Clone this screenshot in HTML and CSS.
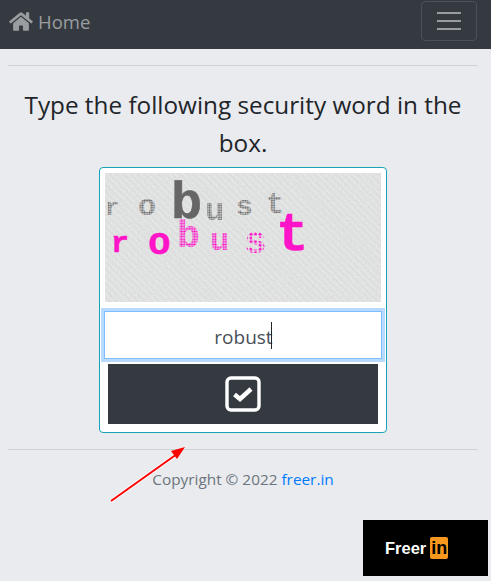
FILE: index.html
```html
<!DOCTYPE html>
<html lang="en">
<head>
    <meta charset="UTF-8">
    <meta name="viewport" content="width=device-width, initial-scale=1.0">
    <title>Security word</title>
    <link rel="stylesheet" href="styles.css">
</head>
<body>
    <!-- Top bar -->
    <nav class="navbar">
        <a class="brand" href="#">
            <svg class="home-icon" viewBox="0 0 576 512"><path fill="currentColor" d="M280.4 148.3L96 300.1V464a16 16 0 0 0 16 16l112.1-.3a16 16 0 0 0 15.9-16V368a16 16 0 0 1 16-16h64a16 16 0 0 1 16 16v95.6a16 16 0 0 0 16 16.1L464 480a16 16 0 0 0 16-16V300L295.7 148.3a12.2 12.2 0 0 0-15.3 0zM571.6 251.5L488 182.6V44.1a12 12 0 0 0-12-12h-56a12 12 0 0 0-12 12v72.6L318.5 43a48 48 0 0 0-61 0L4.3 251.5a12 12 0 0 0-1.6 16.9l25.5 31A12 12 0 0 0 45.2 301l235.2-193.7a12.2 12.2 0 0 1 15.3 0L530.9 301a12 12 0 0 0 16.9-1.6l25.5-31a12 12 0 0 0-1.7-16.9z"/></svg>
            Home
        </a>
        <button class="toggler"><span class="toggler-bars"></span></button>
    </nav>

    <main class="content">
        <hr class="rule rule-top">
        <h1 class="title">Type the following security word in the box.</h1>

        <form class="card">
            <!-- Captcha picture -->
            <div class="captcha">
                <svg class="captcha-word" viewBox="0 0 276 129">
                    <defs>
                        <filter id="paper">
                            <feTurbulence type="fractalNoise" baseFrequency="0.55" numOctaves="2" seed="4"/>
                            <feColorMatrix type="matrix" values="0 0 0 0 0.55  0 0 0 0 0.55  0 0 0 0 0.55  0.5 0 0 0 -0.12"/>
                        </filter>
                        <pattern id="dots-grey" width="2.4" height="2.4" patternUnits="userSpaceOnUse"><circle cx="1.2" cy="1.2" r="1" fill="#666"/></pattern>
                        <pattern id="dots-pink" width="2.6" height="2.6" patternUnits="userSpaceOnUse"><circle cx="1.3" cy="1.3" r="1.1" fill="#ff14c8"/></pattern>
                        <pattern id="specks-pink" width="4.5" height="3.7" patternUnits="userSpaceOnUse"><circle cx="2" cy="2" r="1.5" fill="#ff14c8"/></pattern>
                    </defs>
                    <rect width="276" height="129" filter="url(#paper)"/>
                    <g class="grey-word">
                        <text x="0" y="42" font-size="24" fill="url(#dots-grey)">r</text>
                        <text x="33" y="42" font-size="30" fill="url(#dots-grey)">o</text>
                        <text x="66" y="45" class="solid" font-size="52">b</text>
                        <text x="100" y="47" class="thick" font-size="32" fill="url(#dots-grey)">u</text>
                        <text x="131" y="42" font-size="28" fill="url(#dots-grey)">s</text>
                        <text x="161" y="40" font-size="30" fill="url(#dots-grey)">t</text>
                    </g>
                    <g class="pink-word">
                        <text x="6" y="79" class="solid" font-size="30">r</text>
                        <text x="43" y="81" class="solid" font-size="38">o</text>
                        <text x="72" y="74" font-size="38" fill="url(#dots-pink)">b</text>
                        <text x="105" y="77" font-size="32" fill="url(#dots-pink)">u</text>
                        <text x="139" y="80" class="thick" font-size="38" fill="url(#specks-pink)">s</text>
                        <text x="171" y="77" class="solid" font-size="54">t</text>
                    </g>
                </svg>
            </div>
            <input class="word-input" type="text" value="robust">
            <span class="caret"></span>
            <button class="submit" type="button">
                <svg class="check-icon" viewBox="0 0 36 36">
                    <rect x="2" y="2" width="32" height="32" rx="4" fill="none" stroke="#fff" stroke-width="3.4"/>
                    <path d="M9.5 18.5l5.5 4.5L26 13" fill="none" stroke="#fff" stroke-width="4.4"/>
                </svg>
            </button>
        </form>

        <hr class="rule rule-bottom">
        <p class="copyright">Copyright © 2022 <a href="#">freer.in</a></p>
    </main>

    <!-- Red arrow drawn over the page -->
    <svg class="arrow" viewBox="0 0 80 60">
        <path d="M2 56L68 9" stroke="#fff" stroke-width="3.5"/>
        <path d="M2 56L68 9" stroke="#f00" stroke-width="2"/>
        <path d="M76 2L62 6L68 14Z" fill="#f00"/>
    </svg>

    <a class="badge" href="#">Freer <span class="badge-in">in</span></a>
</body>
</html>
```
FILE: styles.css
```css
html, body {
    height: 100%;
}

body {
    margin: 0;
    background: #e9ebef;
    color: #212529;
    font-family: 'Open Sans', 'Noto Sans', sans-serif;
    overflow: hidden;
}

.navbar {
    display: flex;
    justify-content: space-between;
    align-items: center;
    height: 49px;
    box-sizing: border-box;
    padding: 0 14px 7px 9px;
    background: #343a40;
}

.brand {
    display: flex;
    align-items: center;
    gap: 5px;
    color: #9a9da0;
    font-size: 18.5px;
    text-decoration: none;
}

.home-icon {
    width: 24px;
    height: 21px;
}

.toggler {
    width: 56px;
    height: 40px;
    padding: 0;
    display: flex;
    align-items: center;
    justify-content: center;
    background: none;
    border: 1px solid #4c5157;
    border-radius: 4px;
}

.toggler-bars {
    display: block;
    width: 24px;
    height: 18px;
    box-sizing: border-box;
    border-top: 2px solid #9a9da0;
    border-bottom: 2px solid #9a9da0;
    position: relative;
}

.toggler-bars::after {
    content: "";
    position: absolute;
    left: 0;
    right: 0;
    top: 6px;
    height: 2px;
    background: #9a9da0;
}

.content {
    margin: 0 13px 0 8px;
    text-align: center;
}

.rule {
    margin: 0;
    border: 0;
    border-top: 1px solid #d1d3d6;
}

.rule-top {
    margin-top: 16px;
}

.rule-bottom {
    margin-top: 16px;
}

.title {
    margin: 20px 0 5px;
    font-size: 24.3px;
    font-weight: 400;
    line-height: 38px;
}

.card {
    position: relative;
    width: 288px;
    height: 266px;
    box-sizing: border-box;
    margin: 0 auto;
    padding: 5px 1px 0;
    background: #fff;
    border: 1px solid #17a2b8;
    border-radius: 4px;
}

.captcha {
    height: 129px;
    margin: 0 4px;
    background:
        repeating-linear-gradient(45deg, rgba(255,255,255,.2) 0 2px, transparent 2px 5px),
        #e2e3e3;
}

.captcha-word {
    display: block;
    width: 100%;
    height: 100%;
}

.captcha-word text {
    font-family: 'Liberation Mono', 'DejaVu Sans Mono', monospace;
    font-weight: 700;
}

.grey-word {
    color: #666;
}

.pink-word {
    color: #ff14c8;
}

.solid {
    fill: currentColor;
    stroke: currentColor;
    stroke-width: .5;
}

.thick {
    filter: blur(.2px);
}

.word-input {
    display: block;
    width: 278px;
    height: 48px;
    box-sizing: border-box;
    margin: 9px auto 0;
    padding: 3px 0 0 1px;
    text-align: center;
    color: #495057;
    font-family: inherit;
    font-size: 19px;
    background: #fff;
    border: 1px solid #80bdff;
    outline: none;
    box-shadow: 0 0 0 3px #b8daff;
}

.caret {
    position: absolute;
    left: 171px;
    top: 154px;
    width: 1px;
    height: 27px;
    background: #212529;
}

.submit {
    display: flex;
    align-items: center;
    justify-content: center;
    width: 270px;
    height: 60px;
    margin: 5px auto 0;
    padding: 0;
    background: #343a40;
    border: 0;
}

.check-icon {
    width: 36px;
    height: 36px;
}

.copyright {
    margin: 19px 0 0;
    color: #6c757d;
    font-size: 15.35px;
    line-height: 20px;
}

.copyright a {
    color: #007bff;
    text-decoration: none;
}

.arrow {
    position: absolute;
    left: 109px;
    top: 445px;
    width: 80px;
    height: 60px;
}

.badge {
    position: absolute;
    left: 363px;
    top: 520px;
    width: 125px;
    height: 56px;
    box-sizing: border-box;
    padding-left: 22px;
    display: flex;
    align-items: center;
    gap: 4px;
    background: #000;
    color: #fff;
    font-family: 'Liberation Sans', sans-serif;
    font-size: 16.5px;
    font-weight: 700;
    text-decoration: none;
}

.badge-in {
    width: 18px;
    height: 22px;
    line-height: 22px;
    text-align: center;
    color: #000;
    background: #f7971d;
    border-radius: 2px;
    font-size: 18px;
}
```
